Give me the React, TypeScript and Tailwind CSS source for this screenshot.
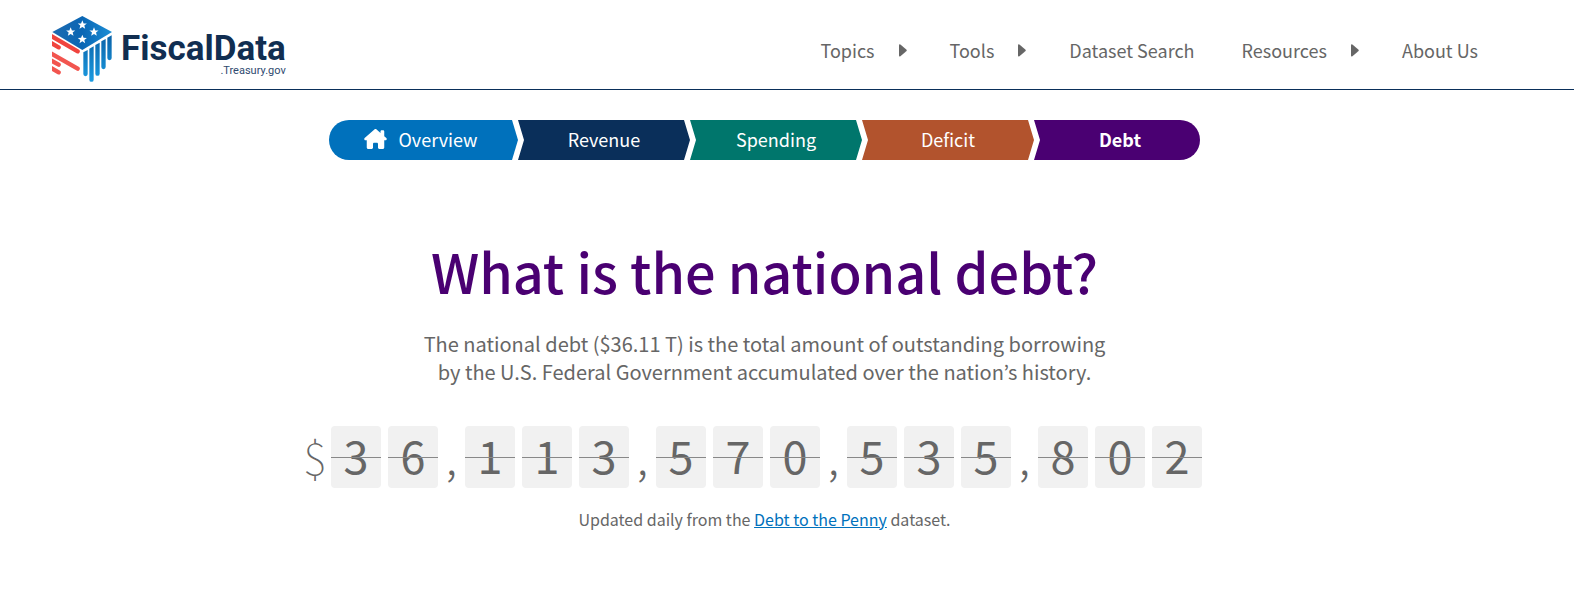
import clsx from 'clsx';

const navLinks = [
  { label: 'Topics', menu: true },
  { label: 'Tools', menu: true },
  { label: 'Dataset Search', menu: false },
  { label: 'Resources', menu: true },
  { label: 'About Us', menu: false },
];

const middleStep =
  'w-[172px] px-[6px] [clip-path:polygon(0_0,166px_0,100%_50%,166px_100%,0_100%,6px_50%)]';

const steps = [
  {
    label: 'Overview',
    className:
      'w-[189px] pr-[6px] bg-[#0071bc] rounded-l-full [clip-path:polygon(0_0,183px_0,100%_50%,183px_100%,0_100%)]',
  },
  { label: 'Revenue', className: clsx(middleStep, 'bg-[#0a2f5a]') },
  { label: 'Spending', className: clsx(middleStep, 'bg-[#00766c]') },
  { label: 'Deficit', className: clsx(middleStep, 'bg-[#b2532d]') },
  {
    label: 'Debt',
    className:
      'w-[166px] pl-[6px] font-bold bg-[#4a0072] rounded-r-full [clip-path:polygon(0_0,100%_0,100%_100%,0_100%,6px_50%)]',
  },
];

const debtGroups = ['36', '113', '570', '535', '802'];

function CubeIcon() {
  const star = 'M0-14 3.8-4.8 13.6-4.3 6 1.8 8.5 11.5 0 6-8.5 11.5-6 1.8-13.6-4.3-3.8-4.8Z';
  return (
    <svg width="62" height="68" viewBox="18 15 186 204" aria-hidden="true">
      <defs>
        <linearGradient id="top" x1="0" y1="0" x2="1" y2="0">
          <stop offset="0" stopColor="#1f6bb0" />
          <stop offset="0.5" stopColor="#0a66b4" />
          <stop offset="1" stopColor="#1c8fd6" />
        </linearGradient>
        <linearGradient id="bars" x1="0" y1="85" x2="0" y2="213" gradientUnits="userSpaceOnUse">
          <stop offset="0" stopColor="#0b66ac" />
          <stop offset="1" stopColor="#1a9ae0" />
        </linearGradient>
        <clipPath id="left">
          <path d="M21 60H112V219H21Z" />
        </clipPath>
      </defs>
      <path d="M112 18 201 66 112 120 22 66Z" fill="url(#top)" />
      <g fill="#fff">
        <path d={star} transform="translate(112 45)" />
        <path d={star} transform="translate(77 66)" />
        <path d={star} transform="translate(147 66)" />
        <path d={star} transform="translate(112 88)" />
      </g>
      <g fill="url(#bars)">
        <path d="M115 127 128 120V192a6.500 6.500 0 0 1-13 0Z" />
        <path d="M133 116 146 109V209a6.500 6.500 0 0 1-13 0Z" />
        <path d="M151 105 164 98V191a6.500 6.500 0 0 1-13 0Z" />
        <path d="M169 94 182 87V171a6.500 6.500 0 0 1-13 0Z" />
        <path d="M187 83 200 76V144a6.500 6.500 0 0 1-13 0Z" />
      </g>
      <g stroke="#f0443e" strokeWidth="13" strokeLinecap="round" clipPath="url(#left)">
        <path d="M16 77 98 124" />
        <path d="M16 98 41 112" />
        <path d="M16 129 98 176" stroke="#f2554f" />
        <path d="M16 150 41 164" stroke="#f2554f" />
        <path d="M16 173 41 187" stroke="#f2554f" />
      </g>
    </svg>
  );
}

function HomeIcon() {
  return (
    <svg width="23" height="20" viewBox="0 0 576 512" fill="currentColor" aria-hidden="true">
      <path d="M575.8 255.5c0 18-15 32.1-32 32.1h-32l.7 160.2c0 2.7-.2 5.4-.5 8.1V472c0 22.1-17.9 40-40 40H392c-22.1 0-40-17.9-40-40v-88.3c0-17.7-14.3-32-32-32h-64c-17.7 0-32 14.3-32 32V472c0 22.1-17.9 40-40 40H104c-22.1 0-40-17.9-40-40V287.6H32c-18 0-32-14-32-32.1 0-9 3-17 10-24L266.4 8c7-7 15-8 22-8s15 2 21 7L416 100V64c0-17.7 14.3-32 32-32h32c17.7 0 32 14.3 32 32v121l52.8 46.5c8 7 12 15 11 24z" />
    </svg>
  );
}

function CaretIcon() {
  return (
    <svg width="8" height="14" viewBox="0 0 8 14" fill="currentColor" aria-hidden="true">
      <path d="M0 2.200Q.1.600 1.400 1.400L7.300 6.600Q8.200 7.500 7.300 8.300L1.400 13.300Q.1 14.100 0 12.600Z" />
    </svg>
  );
}

function Digit({ value }: { value: string }) {
  return (
    <span className="relative flex h-[62px] w-[50px] items-center justify-center rounded bg-[#f1f1f1] pb-[6px] text-[45px] leading-none">
      {value}
      <span className="absolute inset-x-0 top-1/2 h-px bg-[#888]" />
    </span>
  );
}

export default function App() {
  return (
    <div className="min-h-screen bg-white font-['Noto_Sans_CJK_KR',sans-serif] text-[#666]">
      <header className="flex h-[90px] items-center justify-between border-b border-[#0a2f5a] pl-[51px] pr-24">
        <a href="#" className="flex items-start gap-2 pt-2 font-['Roboto',sans-serif] text-[#112e51]">
          <CubeIcon />
          <span className="flex flex-col items-end pt-[18px]">
            <span className="text-[35px] leading-8 font-bold">FiscalData</span>
            <span className="text-[11px] leading-[11px] text-[#2f4a6f]">.Treasury.gov</span>
          </span>
        </a>
        <nav className="flex items-center gap-[47px] pt-[11px] text-lg leading-6">
          {navLinks.map(({ label, menu }) =>
            menu ? (
              <button key={label} type="button" className="-mr-1 flex items-center gap-6">
                {label}
                <CaretIcon />
              </button>
            ) : (
              <a key={label} href="#">
                {label}
              </a>
            )
          )}
        </nav>
      </header>

      <main className="flex flex-col items-center pt-[30px] pr-[45px]">
        <nav className="flex h-10 text-lg leading-6 text-white">
          {steps.map(({ label, className }) => (
            <a key={label} href="#" className={clsx('flex items-center justify-center gap-3 pb-[2px]', className)}>
              {label === 'Overview' && <HomeIcon />}
              {label}
            </a>
          ))}
        </nav>

        <h1 className="mt-[75px] text-[54px] leading-[72px] font-medium text-[#4a0072]">
          What is the national debt?
        </h1>
        <p className="mt-[23px] text-center text-xl leading-7">
          The national debt ($36.11 T) is the total amount of outstanding borrowing
          <br />
          by the U.S. Federal Government accumulated over the nation’s history.
        </p>

        <div className="mt-10 flex pr-6">
          <span className="w-7 text-[45px] leading-[60px] font-thin">$</span>
          {debtGroups.map((group, i) => (
            <div key={i} className="flex">
              {i > 0 && <span className="w-[27px] text-center text-[45px] leading-[60px] font-light">,</span>}
              <div className="flex gap-[7px]">
                {group.split('').map((value, j) => (
                  <Digit key={j} value={value} />
                ))}
              </div>
            </div>
          ))}
        </div>

        <p className="mt-[19px] text-base leading-6">
          Updated daily from the{' '}
          <a href="#" className="text-[#0071bc] underline">
            Debt to the Penny
          </a>{' '}
          dataset.
        </p>
      </main>
    </div>
  );
}
